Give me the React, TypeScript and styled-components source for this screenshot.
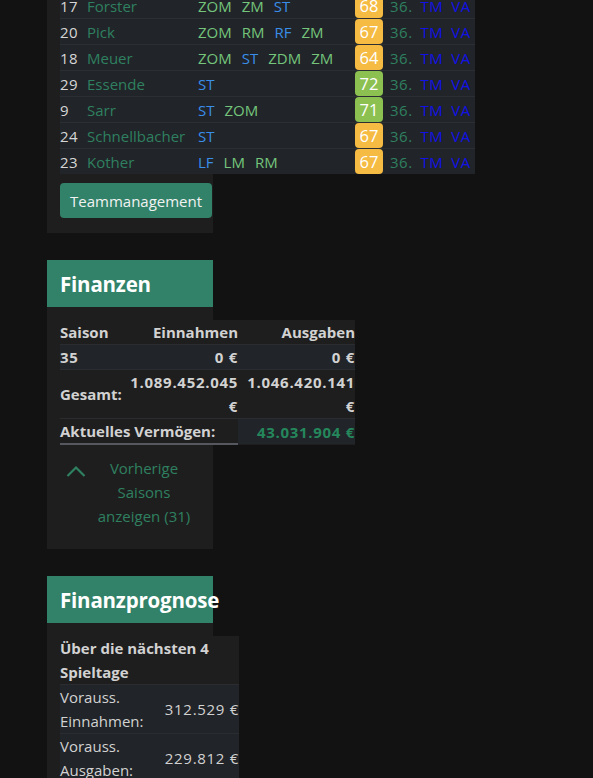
import React from "react";
import styled, { createGlobalStyle } from "styled-components";

const GlobalStyle = createGlobalStyle`
  html, body {
    margin: 0;
    padding: 0;
    background: #121212;
    font-family: "Open Sans", "Noto Sans", sans-serif;
    font-size: 15px;
    color: #d4d4d4;
    overflow: hidden;
  }
`;

const Page = styled.div`
  display: flex;
  flex-direction: column;
  align-items: flex-start;
  gap: 27px;
  padding-left: 47px;
  margin-top: -8px;
`;

const Card = styled.section`
  width: 166px;
  background: #1e1e1e;
  display: flex;
  flex-direction: column;
`;

const CardHeader = styled.header`
  height: 47px;
  background: #318268;
  display: flex;
  align-items: center;
  padding: 0 13px;
`;

const CardTitle = styled.h2`
  margin: 0;
  font-size: 20.5px;
  font-weight: 700;
  letter-spacing: -0.2px;
  color: #ffffff;
  white-space: nowrap;
`;

const CardBody = styled.div<{ $top?: number; $bottom?: number }>`
  padding: ${(p) => p.$top ?? 13}px 0 ${(p) => p.$bottom ?? 13}px 13px;
  display: flex;
  flex-direction: column;
  align-items: flex-start;
`;

/* Squad list */

const SquadViewport = styled.div`
  width: 415px;
  overflow: hidden;
`;

const SquadRow = styled.div`
  display: grid;
  grid-template-columns: 27px 111px 157px 35px auto;
  align-items: center;
  height: 26px;
  background: #212428;
  border-top: 1px solid #2b2e33;
  box-sizing: border-box;
  white-space: nowrap;
`;

const ShirtNo = styled.span`
  color: #d6d6d6;
  letter-spacing: 0.5px;
`;

const PlayerName = styled.span`
  color: #2f8060;
`;

const Positions = styled.span`
  display: flex;
  gap: 10px;
`;

const Pos = styled.span<{ $kind: "att" | "mid" }>`
  color: ${(p) => (p.$kind === "att" ? "#3a8ee8" : "#74c47c")};
`;

const Rating = styled.span<{ $tone: "good" | "mid" }>`
  width: 28px;
  height: 25px;
  border-radius: 4px;
  background: ${(p) => (p.$tone === "good" ? "#8cc152" : "#f6bb42")};
  color: #fff;
  font-size: 16.5px;
  display: flex;
  align-items: center;
  justify-content: center;
`;

const Tail = styled.span`
  display: flex;
  gap: 8px;
`;

const Matchday = styled.span`
  color: #2f8060;
  letter-spacing: 0.5px;
`;

const ExtLink = styled.span`
  color: #1212e6;
  letter-spacing: 0.5px;
`;

const ActionButton = styled.button`
  margin-top: 9px;
  margin-bottom: 2px;
  height: 35px;
  padding: 0 10px;
  border: none;
  border-radius: 4px;
  background: #318268;
  color: #f2f2f2;
  font: inherit;
  cursor: pointer;
`;

/* Finance tables */

const Table = styled.table<{ $width: number }>`
  width: ${(p) => p.$width}px;
  border-collapse: collapse;
  background: #1e1e1e;
  line-height: 24px;
  table-layout: fixed;
`;

const Th = styled.th<{ $align?: "left" | "right" }>`
  padding: 0;
  text-align: ${(p) => p.$align ?? "left"};
  font-weight: 700;
  color: #d2d2d2;
`;

const Tr = styled.tr<{ $striped?: boolean }>`
  background: ${(p) => (p.$striped ? "#212428" : "transparent")};
  border-top: 1px solid #2a2c30;
`;

const HeadRow = styled.tr``;

const Td = styled.td<{
  $align?: "left" | "right";
  $bold?: boolean;
  $tone?: "money";
  $num?: boolean;
}>`
  padding: 0 0 0 4px;
  text-align: ${(p) => p.$align ?? "left"};
  font-weight: ${(p) => (p.$bold ? 700 : 400)};
  color: ${(p) => (p.$tone === "money" ? "#25875c" : "#d2d2d2")};
  letter-spacing: ${(p) => (p.$num ? "0.7px" : "normal")};
  vertical-align: middle;
  &:first-child {
    padding-left: 0;
  }
`;

const WealthLabel = styled(Td)`
  background: #1e1e1e;
  border-bottom: 2px solid #55585e;
`;

const ToggleRow = styled.button`
  margin-top: 11px;
  display: flex;
  align-items: flex-start;
  gap: 10px;
  padding: 0 0 0 6px;
  background: none;
  border: none;
  font: inherit;
  line-height: 24px;
  color: #2f8060;
  cursor: pointer;
`;

const ChevronBox = styled.span`
  display: flex;
  padding-top: 9px;
`;

const ToggleText = styled.span`
  width: 96px;
  text-align: center;
`;

type Player = {
  no: number;
  name: string;
  pos: [string, "att" | "mid"][];
  rating: number;
};

const players: Player[] = [
  { no: 17, name: "Forster", pos: [["ZOM", "mid"], ["ZM", "mid"], ["ST", "att"]], rating: 68 },
  { no: 20, name: "Pick", pos: [["ZOM", "mid"], ["RM", "mid"], ["RF", "att"], ["ZM", "mid"]], rating: 67 },
  { no: 18, name: "Meuer", pos: [["ZOM", "mid"], ["ST", "att"], ["ZDM", "mid"], ["ZM", "mid"]], rating: 64 },
  { no: 29, name: "Essende", pos: [["ST", "att"]], rating: 72 },
  { no: 9, name: "Sarr", pos: [["ST", "att"], ["ZOM", "mid"]], rating: 71 },
  { no: 24, name: "Schnellbacher", pos: [["ST", "att"]], rating: 67 },
  { no: 23, name: "Kother", pos: [["LF", "att"], ["LM", "mid"], ["RM", "mid"]], rating: 67 },
];

const ChevronUp = () => (
  <svg width="20" height="12" viewBox="0 0 20 12" fill="none">
    <path d="M1.5 11 L10 2.5 L18.5 11" stroke="#2f8060" strokeWidth="2.2" />
  </svg>
);

export default function App() {
  return (
    <>
      <GlobalStyle />
      <Page>
        <Card>
          <CardBody $top={0}>
            <SquadViewport>
              {players.map((p) => (
                <SquadRow key={p.no}>
                  <ShirtNo>{p.no}</ShirtNo>
                  <PlayerName>{p.name}</PlayerName>
                  <Positions>
                    {p.pos.map(([label, kind]) => (
                      <Pos key={label} $kind={kind}>
                        {label}
                      </Pos>
                    ))}
                  </Positions>
                  <Rating $tone={p.rating >= 70 ? "good" : "mid"}>{p.rating}</Rating>
                  <Tail>
                    <Matchday>36.</Matchday>
                    <ExtLink>TM</ExtLink>
                    <ExtLink>VA</ExtLink>
                  </Tail>
                </SquadRow>
              ))}
            </SquadViewport>
            <ActionButton>Teammanagement</ActionButton>
          </CardBody>
        </Card>

        <Card>
          <CardHeader>
            <CardTitle>Finanzen</CardTitle>
          </CardHeader>
          <CardBody $bottom={21}>
            <Table $width={295}>
              <colgroup>
                <col style={{ width: 66 }} />
                <col style={{ width: 112 }} />
                <col style={{ width: 117 }} />
              </colgroup>
              <thead>
                <HeadRow>
                  <Th>Saison</Th>
                  <Th $align="right">Einnahmen</Th>
                  <Th $align="right">Ausgaben</Th>
                </HeadRow>
              </thead>
              <tbody>
                <Tr $striped>
                  <Td $bold $num>35</Td>
                  <Td $bold $num $align="right">0 €</Td>
                  <Td $bold $num $align="right">0 €</Td>
                </Tr>
                <Tr>
                  <Td $bold>Gesamt:</Td>
                  <Td $bold $num $align="right">1.089.452.045 €</Td>
                  <Td $bold $num $align="right">1.046.420.141 €</Td>
                </Tr>
                <Tr $striped>
                  <WealthLabel $bold colSpan={2}>
                    Aktuelles Vermögen:
                  </WealthLabel>
                  <Td $bold $num $align="right" $tone="money">
                    43.031.904 €
                  </Td>
                </Tr>
              </tbody>
            </Table>
            <ToggleRow>
              <ChevronBox>
                <ChevronUp />
              </ChevronBox>
              <ToggleText>Vorherige Saisons anzeigen (31)</ToggleText>
            </ToggleRow>
          </CardBody>
        </Card>

        <Card>
          <CardHeader>
            <CardTitle>Finanzprognose</CardTitle>
          </CardHeader>
          <CardBody>
            <Table $width={179}>
              <colgroup>
                <col style={{ width: 100 }} />
                <col style={{ width: 79 }} />
              </colgroup>
              <thead>
                <HeadRow>
                  <Th colSpan={2}>Über die nächsten 4 Spieltage</Th>
                </HeadRow>
              </thead>
              <tbody>
                <Tr $striped>
                  <Td>Vorauss. Einnahmen:</Td>
                  <Td $num $align="right">312.529 €</Td>
                </Tr>
                <Tr $striped>
                  <Td>Vorauss. Ausgaben:</Td>
                  <Td $num $align="right">229.812 €</Td>
                </Tr>
              </tbody>
            </Table>
          </CardBody>
        </Card>
      </Page>
    </>
  );
}
